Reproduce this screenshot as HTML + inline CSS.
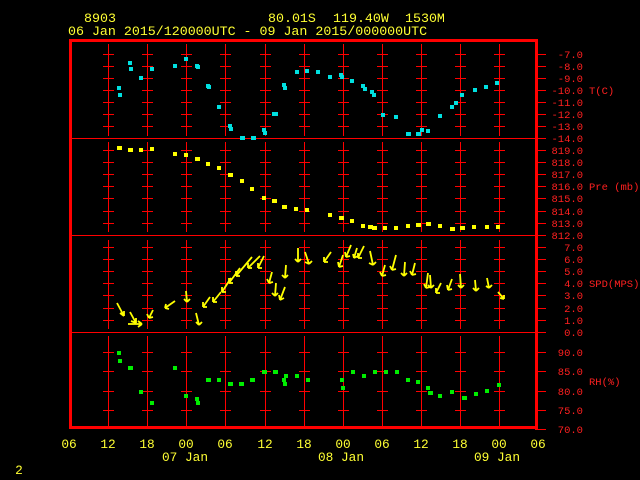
<!DOCTYPE html>
<html><head><meta charset="utf-8"><style>
html,body{margin:0;padding:0;background:#000;}
svg{display:block}
text{font-family:"Liberation Mono","DejaVu Sans Mono",monospace;}
</style></head><body>
<svg width="640" height="480" viewBox="0 0 640 480" xmlns="http://www.w3.org/2000/svg">
<rect width="640" height="480" fill="#000"/>
<defs>
<g id="c" stroke="#ff0000" stroke-width="1" fill="none" shape-rendering="crispEdges">
<path d="M0.5,44V136M0.5,142V232M0.5,240V329M0.5,336V427"/>
<path d="M-5,54.5h11M-5,66.5h11M-5,78.5h11M-5,90.5h11M-5,102.5h11M-5,114.5h11M-5,126.5h11
M-5,150.5h11M-5,162.5h11M-5,174.5h11M-5,186.5h11M-5,198.5h11M-5,211.5h11M-5,223.5h11
M-5,247.5h11M-5,259.5h11M-5,271.5h11M-5,283.5h11M-5,295.5h11M-5,308.5h11M-5,320.5h11
M-5,352.5h11M-5,371.5h11M-5,391.5h11M-5,410.5h11"/>
</g>
</defs>
<g>
<use href="#c" x="108"/><use href="#c" x="147"/><use href="#c" x="186"/><use href="#c" x="225"/>
<use href="#c" x="265"/><use href="#c" x="304"/><use href="#c" x="343"/><use href="#c" x="382"/>
<use href="#c" x="421"/><use href="#c" x="460"/><use href="#c" x="499"/>
</g>
<g stroke="#ff0000" fill="none" shape-rendering="crispEdges">
<rect x="70.5" y="40.5" width="466" height="387" stroke-width="3"/>
<path d="M70,138.5H537M70,235.5H537M70,332.5H537" stroke-width="1"/>
<path d="M535,54.5h11M535,66.5h11M535,78.5h11M535,90.5h11M535,102.5h11M535,114.5h11M535,126.5h11M535,138.5h11
M535,150.5h11M535,162.5h11M535,174.5h11M535,186.5h11M535,198.5h11M535,211.5h11M535,223.5h11M535,235.5h11
M535,247.5h11M535,259.5h11M535,271.5h11M535,283.5h11M535,295.5h11M535,308.5h11M535,320.5h11M535,332.5h11
M535,352.5h11M535,371.5h11M535,391.5h11M535,410.5h11M535,429.5h11"/>
</g>
<g fill="#ff2020" font-size="10.5" text-anchor="end">
<text x="583" y="58">-7.0</text><text x="583" y="70">-8.0</text><text x="583" y="82">-9.0</text>
<text x="583" y="94">-10.0</text><text x="583" y="106">-11.0</text><text x="583" y="118">-12.0</text>
<text x="583" y="130">-13.0</text><text x="583" y="142">-14.0</text>
<text x="583" y="154">819.0</text><text x="583" y="166">818.0</text><text x="583" y="178">817.0</text>
<text x="583" y="190">816.0</text><text x="583" y="202">815.0</text><text x="583" y="215">814.0</text>
<text x="583" y="227">813.0</text><text x="583" y="239">812.0</text>
<text x="583" y="251">7.0</text><text x="583" y="263">6.0</text><text x="583" y="275">5.0</text>
<text x="583" y="287">4.0</text><text x="583" y="299">3.0</text><text x="583" y="312">2.0</text>
<text x="583" y="324">1.0</text><text x="583" y="336">0.0</text>
<text x="583" y="356">90.0</text><text x="583" y="375">85.0</text><text x="583" y="395">80.0</text>
<text x="583" y="414">75.0</text><text x="583" y="433">70.0</text>
</g>
<g fill="#ff2020" font-size="10.5">
<text x="589" y="94">T(C)</text>
<text x="589" y="190">Pre (mb)</text>
<text x="589" y="287">SPD(MPS)</text>
<text x="589" y="385">RH(%)</text>
</g>
<g fill="#ffff33" font-size="13.3">
<text x="84" y="22">8903</text>
<text x="268" y="22">80.01S</text><text x="333" y="22">119.40W</text><text x="405" y="22">1530M</text>
<text x="68" y="35">06 Jan 2015/120000UTC - 09 Jan 2015/000000UTC</text>
</g>
<g fill="#ffff33" font-size="12.8" text-anchor="middle">
<text x="69" y="448">06</text><text x="108" y="448">12</text><text x="147" y="448">18</text>
<text x="186" y="448">00</text><text x="225" y="448">06</text><text x="265" y="448">12</text>
<text x="304" y="448">18</text><text x="343" y="448">00</text><text x="382" y="448">06</text>
<text x="421" y="448">12</text><text x="460" y="448">18</text><text x="499" y="448">00</text>
<text x="538" y="448">06</text>
<text x="185" y="461">07 Jan</text><text x="341" y="461">08 Jan</text><text x="497" y="461">09 Jan</text>
<text x="19" y="474">2</text>
</g>
<g fill="#00e0e0">
<rect x="117" y="86" width="4" height="4"/><rect x="118" y="93" width="4" height="4"/><rect x="128" y="61" width="4" height="4"/>
<rect x="129" y="67" width="4" height="4"/><rect x="139" y="76" width="4" height="4"/><rect x="150" y="67" width="4" height="4"/>
<rect x="173" y="64" width="4" height="4"/><rect x="184" y="57" width="4" height="4"/><rect x="195" y="64" width="4" height="4"/>
<rect x="196" y="65" width="4" height="4"/><rect x="206" y="84" width="4" height="4"/><rect x="207" y="85" width="4" height="4"/>
<rect x="217" y="105" width="4" height="4"/><rect x="228" y="124" width="4" height="4"/><rect x="229" y="127" width="4" height="4"/>
<rect x="240" y="136" width="5" height="4"/><rect x="251" y="136" width="5" height="4"/><rect x="262" y="128" width="4" height="4"/>
<rect x="263" y="131" width="4" height="4"/><rect x="272" y="112" width="6" height="4"/><rect x="282" y="83" width="4" height="4"/>
<rect x="283" y="86" width="4" height="4"/><rect x="295" y="70" width="4" height="4"/><rect x="305" y="69" width="4" height="4"/>
<rect x="316" y="70" width="4" height="4"/><rect x="328" y="75" width="4" height="4"/><rect x="339" y="73" width="4" height="4"/>
<rect x="340" y="75" width="4" height="4"/><rect x="350" y="79" width="4" height="4"/><rect x="361" y="84" width="4" height="4"/>
<rect x="363" y="87" width="4" height="4"/><rect x="370" y="90" width="4" height="4"/><rect x="372" y="93" width="4" height="4"/>
<rect x="381" y="113" width="4" height="4"/><rect x="394" y="115" width="4" height="4"/><rect x="406" y="132" width="5" height="4"/>
<rect x="416" y="132" width="5" height="4"/><rect x="420" y="128" width="4" height="4"/><rect x="426" y="129" width="4" height="4"/>
<rect x="438" y="114" width="4" height="4"/><rect x="450" y="105" width="4" height="4"/><rect x="454" y="101" width="4" height="4"/>
<rect x="460" y="93" width="4" height="4"/><rect x="473" y="88" width="4" height="4"/><rect x="484" y="85" width="4" height="4"/>
<rect x="495" y="81" width="4" height="4"/>
</g>
<g fill="#ffff00">
<rect x="117" y="146" width="5" height="4"/><rect x="128" y="148" width="5" height="4"/><rect x="139" y="148" width="4" height="4"/>
<rect x="150" y="147" width="4" height="4"/><rect x="173" y="152" width="4" height="4"/><rect x="184" y="153" width="4" height="4"/>
<rect x="195" y="157" width="5" height="4"/><rect x="206" y="162" width="4" height="4"/><rect x="217" y="166" width="4" height="4"/>
<rect x="228" y="173" width="5" height="4"/><rect x="240" y="179" width="4" height="4"/><rect x="250" y="187" width="4" height="4"/>
<rect x="262" y="196" width="4" height="4"/><rect x="272" y="199" width="5" height="4"/><rect x="282" y="205" width="5" height="4"/>
<rect x="294" y="207" width="4" height="4"/><rect x="305" y="208" width="4" height="4"/><rect x="328" y="213" width="4" height="4"/>
<rect x="339" y="216" width="5" height="4"/><rect x="350" y="219" width="4" height="4"/><rect x="361" y="224" width="4" height="4"/>
<rect x="368" y="225" width="5" height="4"/><rect x="372" y="226" width="5" height="4"/><rect x="383" y="226" width="4" height="4"/>
<rect x="394" y="226" width="4" height="4"/><rect x="406" y="224" width="4" height="4"/><rect x="416" y="223" width="5" height="4"/>
<rect x="426" y="222" width="5" height="4"/><rect x="438" y="224" width="4" height="4"/><rect x="450" y="227" width="5" height="4"/>
<rect x="460" y="226" width="5" height="4"/><rect x="472" y="225" width="4" height="4"/><rect x="485" y="225" width="4" height="4"/>
<rect x="496" y="225" width="4" height="4"/>
</g>
<g fill="#00ee00">
<rect x="117" y="351" width="4" height="4"/><rect x="118" y="359" width="4" height="4"/><rect x="128" y="366" width="5" height="4"/>
<rect x="139" y="390" width="4" height="4"/><rect x="150" y="401" width="4" height="4"/><rect x="173" y="366" width="4" height="4"/>
<rect x="184" y="394" width="4" height="4"/><rect x="195" y="397" width="4" height="4"/><rect x="196" y="401" width="4" height="4"/>
<rect x="206" y="378" width="5" height="4"/><rect x="217" y="378" width="4" height="4"/><rect x="228" y="382" width="5" height="4"/>
<rect x="239" y="382" width="5" height="4"/><rect x="250" y="378" width="5" height="4"/><rect x="262" y="370" width="5" height="4"/>
<rect x="273" y="370" width="5" height="4"/><rect x="282" y="378" width="4" height="4"/><rect x="283" y="382" width="4" height="4"/>
<rect x="284" y="374" width="4" height="4"/><rect x="295" y="374" width="4" height="4"/><rect x="306" y="378" width="4" height="4"/>
<rect x="340" y="378" width="4" height="4"/><rect x="341" y="386" width="4" height="4"/><rect x="351" y="370" width="4" height="4"/>
<rect x="362" y="374" width="4" height="4"/><rect x="373" y="370" width="4" height="4"/><rect x="384" y="370" width="4" height="4"/>
<rect x="395" y="370" width="4" height="4"/><rect x="406" y="378" width="4" height="4"/><rect x="416" y="380" width="4" height="4"/>
<rect x="426" y="386" width="4" height="4"/><rect x="428" y="391" width="5" height="4"/><rect x="438" y="394" width="4" height="4"/>
<rect x="450" y="390" width="4" height="4"/><rect x="462" y="396" width="5" height="4"/><rect x="474" y="392" width="4" height="4"/>
<rect x="485" y="389" width="4" height="4"/><rect x="497" y="383" width="4" height="4"/>
</g>
<g stroke="#ffff00" stroke-width="1.8" fill="none">
<path d="M117,303L124,316M124,316l0,-5M124,316l-4,-3"/>
<path d="M130,312L136,323M136,323l0,-5M136,323l-5,-2"/>
<path d="M128,324L142,324M142,324l-4,-3M142,324l-4,3"/>
<path d="M153,310L149,318M149,318l-2,-4M149,318l4,-1"/>
<path d="M175,301L165,308M165,308l1,-4M165,308l4,1"/>
<path d="M186,291L187,302M187,302l-3,-3M187,302l3,-3"/>
<path d="M196,313L199,325M199,325l-3,-3M199,325l3,-3"/>
<path d="M210,297L203,307M203,307l0,-5M203,307l4,0"/>
<path d="M221,292L213,302M213,302l0,-5M213,302l4,0"/>
<path d="M231,278L222,292M222,292l0,-5M222,292l4,0"/>
<path d="M240,268L229,283M229,283l0,-5M229,283l4,0"/>
<path d="M252,257L236,276M236,276l0,-5M236,276l4,0"/>
<path d="M260,256L248,268M248,268l0,-5M248,268l4,0"/>
<path d="M264,256L258,268M258,268l0,-5M258,268l4,0"/>
<path d="M272,272L269,283M269,283l-2,-4M269,283l4,-1"/>
<path d="M276,283L275,296M275,296l-3,-3M275,296l3,-3"/>
<path d="M285,287L280,300M280,300l-1,-5M280,300l4,-2"/>
<path d="M286,265L285,278M285,278l-3,-3M285,278l3,-3"/>
<path d="M298,248L298,262M298,262l-3,-3M298,262l3,-3"/>
<path d="M305,252L309,264M309,264l-4,-2M309,264l3,-3"/>
<path d="M331,252L324,262M324,262l0,-5M324,262l4,0"/>
<path d="M343,255L339,267M339,267l-1,-5M339,267l4,-1"/>
<path d="M351,245L346,257M346,257l-1,-5M346,257l4,-1"/>
<path d="M357,248L354,258M354,258l-1,-4M354,258l4,-2"/>
<path d="M364,246L358,258M358,258l0,-5M358,258l4,0"/>
<path d="M370,251L373,265M373,265l-4,-2M373,265l3,-3"/>
<path d="M385,265L382,276M382,276l-2,-4M382,276l4,-1"/>
<path d="M396,255L392,270M392,270l-2,-4M392,270l4,-1"/>
<path d="M405,262L404,276M404,276l-3,-3M404,276l3,-3"/>
<path d="M415,263L412,275M412,275l-2,-4M412,275l4,-1"/>
<path d="M428,273L426,288M426,288l-2,-4M426,288l4,-1"/>
<path d="M430,275L431,288M431,288l-3,-3M431,288l3,-3"/>
<path d="M441,283L436,293M436,293l0,-5M436,293l4,0"/>
<path d="M452,279L448,290M448,290l-1,-5M448,290l4,-1"/>
<path d="M460,274L461,288M461,288l-3,-3M461,288l3,-3"/>
<path d="M475,280L476,291M476,291l-3,-3M476,291l3,-3"/>
<path d="M487,278L489,288M489,288l-3,-2M489,288l3,-3"/>
<path d="M498,292L504,299M504,299l-4,-1M504,299l0,-4"/>
</g>
</svg>
</body></html>
